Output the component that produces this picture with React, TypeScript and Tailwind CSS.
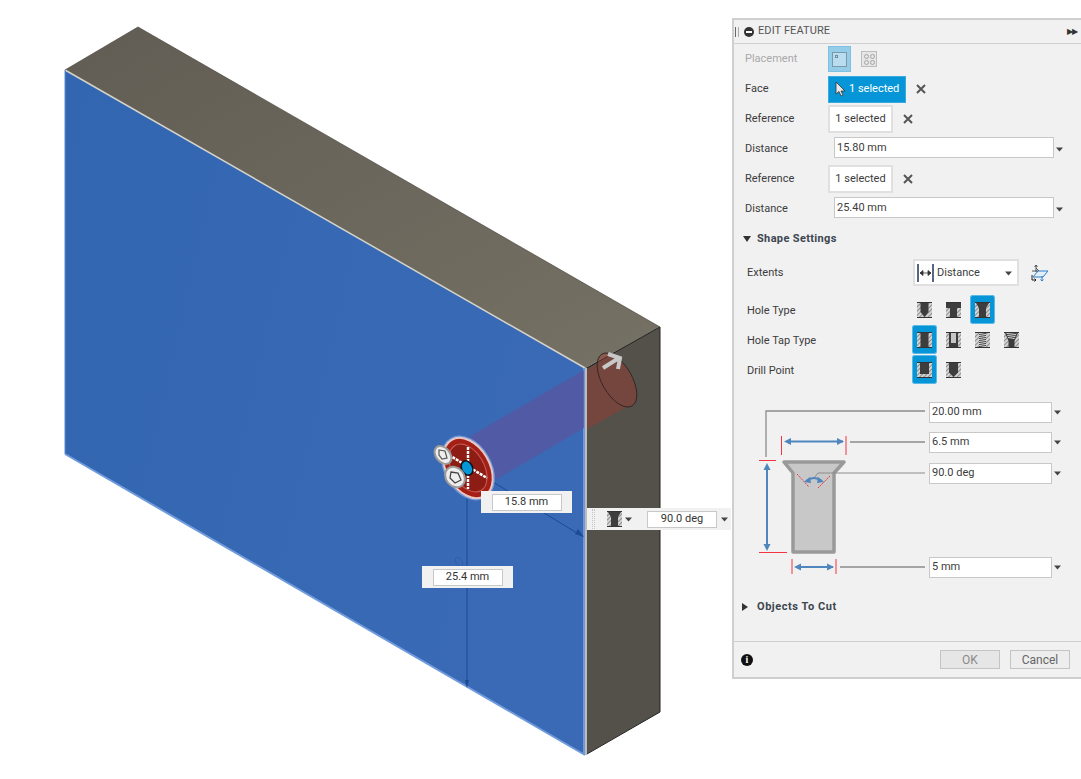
import React from "react";

const font = { fontFamily: "Roboto, 'Liberation Sans', sans-serif" };

function Caret({ className = "" }: { className?: string }) {
  return (
    <svg width="7" height="5" viewBox="0 0 7 5" className={className}>
      <path d="M0 0.5H7L3.5 4.5Z" fill="#444" />
    </svg>
  );
}

function Close({ className = "" }: { className?: string }) {
  return (
    <svg width="10" height="10" viewBox="0 0 10 10" className={className}>
      <path d="M1 1L9 9M9 1L1 9" stroke="#555" strokeWidth="2" />
    </svg>
  );
}

function Hatch({ id }: { id: string }) {
  return (
    <pattern id={id} width="3" height="3" patternUnits="userSpaceOnUse" patternTransform="rotate(-45)">
      <rect width="3" height="3" fill="#d4d4d4" />
      <rect width="3" height="1" fill="#8c8c8c" />
    </pattern>
  );
}

type Kind = "blind" | "counterbore" | "countersink" | "simple" | "clearance" | "tapped" | "taper" | "flat" | "angled";

function HoleIcon({ kind, id }: { kind: Kind; id: string }) {
  const dark = "#3d3d3d";
  const body: Record<Kind, React.ReactNode> = {
    blind: <path d="M3.500 1H11.500V10L7.500 15L3.500 10Z" fill={dark} />,
    counterbore: <path d="M0 1H15V6H11V15H4V6H0Z" fill={dark} />,
    countersink: <path d="M1 1H14L11 6V15H4V6Z" fill={dark} />,
    simple: <rect x="3.500" y="1" width="8" height="14" fill={dark} />,
    clearance: (
      <g>
        <rect x="3" y="1" width="9" height="14" fill={dark} />
        <rect x="5" y="1" width="5" height="10" fill="#c6c6c6" />
      </g>
    ),
    tapped: (
      <g>
        <rect x="4" y="1" width="7" height="14" fill="#e0e0e0" />
        {[2, 4, 6, 8, 10, 12, 14].map((y) => (
          <path key={y} d={`M4 ${y + 0.5}L11 ${y - 0.5}`} stroke={dark} strokeWidth="1" />
        ))}
      </g>
    ),
    taper: (
      <g>
        <path d="M1 1H14L10.500 9V15H4.500V9Z" fill={dark} />
        <path d="M2.500 1H12.500L10.500 7H4.500Z" fill="#dcdcdc" />
        {[2, 4, 6].map((y) => (
          <path key={y} d={`M${2 + y / 3} ${y + 0.5}L${13 - y / 3} ${y - 0.5}`} stroke={dark} strokeWidth="1" />
        ))}
      </g>
    ),
    flat: <rect x="3" y="1" width="9" height="11" fill={dark} />,
    angled: <path d="M3 1H12V10.500L7.500 15L3 10.500Z" fill={dark} />,
  };
  return (
    <svg width="15" height="16" viewBox="0 0 15 16" className="block">
      <defs>
        <Hatch id={id} />
      </defs>
      <rect y="0.500" width="15" height="15" fill={`url(#${id})`} />
      {body[kind]}
      <path d="M0 0.500H15M0 15.500H15" stroke="#333" strokeWidth="1" />
    </svg>
  );
}

function HoleBtn({ kind, id, on }: { kind: Kind; id: string; on?: boolean }) {
  return (
    <div
      className={`flex h-[27px] w-[23px] items-center justify-center rounded-[1px] ${
        on ? "bg-[#0696d7] outline outline-1 outline-[#5cb8e4]" : ""
      }`}
    >
      <HoleIcon kind={kind} id={id} />
    </div>
  );
}

function Label({ children }: { children: React.ReactNode }) {
  return <div className="w-[83px] shrink-0 text-[#3c3c3c]">{children}</div>;
}

function SelectionBtn() {
  return (
    <div className="flex h-[28px] w-[65px] items-center justify-center border-2 border-[#e0e0e0] bg-white text-[#3c3c3c]">
      1 selected
    </div>
  );
}

function ValueInput({ value, className = "" }: { value: string; className?: string }) {
  return (
    <div className={`mb-[3px] flex h-[21px] items-center border border-[#c8c8c8] bg-white px-[2px] pt-[2px] text-[#3c3c3c] ${className}`}>
      {value}
    </div>
  );
}

function Scene() {
  return (
    <svg className="absolute inset-0" width="1081" height="779" viewBox="0 0 1081 779">
      <defs>
        <linearGradient id="topFace" x1="0" y1="0" x2="1" y2="1">
          <stop offset="0" stopColor="#625d54" />
          <stop offset="1" stopColor="#757164" />
        </linearGradient>
        <linearGradient id="blueFace" x1="0" y1="0" x2="1" y2="0.300">
          <stop offset="0" stopColor="#3266b1" />
          <stop offset="1" stopColor="#3a6ab5" />
        </linearGradient>
      </defs>
      <path d="M65 70L138 27L660 327L585 368Z" fill="url(#topFace)" />
      <path d="M585 368L660 327V712L585 755Z" fill="#54514a" />
      <path d="M65 70L585 368V755L65 454Z" fill="url(#blueFace)" />
      <path d="M65 70L585 368" stroke="#d5d2c8" strokeWidth="1.500" />
      <path d="M584 368V755" stroke="#6f97dc" strokeWidth="2" />
      <path d="M586 368V755" stroke="#bdbdb8" strokeWidth="2" />
      <path d="M65 454L585 755" stroke="#6f9bdc" strokeWidth="2" />
      <path d="M65 70V454" stroke="#5b8ad0" strokeWidth="1" />
      <path d="M660 327L587 368" stroke="#222" strokeWidth="1" />
      <path d="M660 327V712L587 754" stroke="#222" strokeWidth="1" fill="none" />
      <path d="M138 27L660 327M138 27L65 70" stroke="#4a463f" strokeWidth="0.700" />

      <path d="M467 438L584 370V428L492 482Z" fill="#5a55a0" fillOpacity="0.75" />
      <g opacity="0.4" fill="#a8372c">
        <path d="M587 370L601 361L628 406L587 429Z" />
        <ellipse cx="617" cy="380" rx="15" ry="30" transform="rotate(-30 617 380)" />
      </g>
      <ellipse cx="617" cy="380" rx="15" ry="30" transform="rotate(-30 617 380)" fill="none" stroke="#2a2220" strokeWidth="0.800" />

      <path d="M603 368L619 358M608 354L620 358L618 369" stroke="#c8c8c8" strokeWidth="4" fill="none" />

      <path d="M493 482L582 536" stroke="#1c4a94" strokeWidth="1" />
      <path d="M584 537L575 534L578 529Z" fill="#1c4a94" />
      <path d="M467 490V686" stroke="#1c4a94" strokeWidth="1" />
      <path d="M467 688L465 680H469Z" fill="#1c4a94" />
      <ellipse cx="459" cy="562" rx="3" ry="5" transform="rotate(-35 459 562)" fill="none" stroke="#2d5ca6" strokeWidth="0.800" />

      <ellipse cx="468" cy="468" rx="23" ry="34" transform="rotate(-30 468 468)" fill="none" stroke="#6f97dc" strokeWidth="1.500" />
      <ellipse cx="468" cy="468" rx="21.500" ry="32.500" transform="rotate(-30 468 468)" fill="#a51f16" stroke="#e8c8c4" strokeWidth="2" />
      <ellipse cx="468" cy="468" rx="16" ry="26" transform="rotate(-30 468 468)" fill="#8d1c14" stroke="#c9605a" strokeWidth="1" />
      <path d="M468 447V489M449 455L487 478" stroke="#fff" strokeWidth="2.500" strokeDasharray="3 1" />
      <ellipse cx="467" cy="468" rx="5.500" ry="7.500" transform="rotate(-25 467 468)" fill="#0696d7" stroke="#111" strokeWidth="1.500" />
      <ellipse cx="443" cy="455" rx="7" ry="10" transform="rotate(-40 443 455)" fill="#eee" stroke="#9c9c9c" strokeWidth="2" />
      <path d="M439 450L445 451L447 458L442 459L439 455Z" fill="none" stroke="#555" strokeWidth="1.200" />
      <ellipse cx="455" cy="477" rx="9" ry="11" transform="rotate(-40 455 477)" fill="#eee" stroke="#9c9c9c" strokeWidth="2" />
      <path d="M451 472L458 473L461 480L455 483L450 478Z" fill="none" stroke="#444" strokeWidth="1.300" />
    </svg>
  );
}

function Diagram() {
  const blue = "#4f86bd";
  const red = "#f0353f";
  const grey = "#8c8c8c";
  return (
    <svg width="195" height="190" viewBox="734 390 195 190" className="block shrink-0">
      <path d="M766 457V411H925M850 442H925M840 567H925" fill="none" stroke={grey} strokeWidth="1.300" />
      <path d="M784 462H844L834 473V552H793V473Z" fill="#c8c8c8" stroke="#999" strokeWidth="3.500" strokeLinejoin="round" />
      <path d="M781.500 436V455M846 436V455M792 559V574M836 559V574M759 460.500H776M759 552.500H787" stroke={red} strokeWidth="1" fill="none" />
      <path d="M797 474L809 487M830 476L818 488" stroke={red} strokeWidth="1" strokeDasharray="2 1" />
      <path d="M814 478L818 473H925" fill="none" stroke={grey} strokeWidth="1" />
      <g stroke={blue} strokeWidth="2" fill="none">
        <path d="M787 441.500H843" />
        <path d="M767 466V548" />
        <path d="M797 567H833" />
        <path d="M806 481Q814 475 822 481" />
      </g>
      <g fill={blue}>
        <path d="M784 441.500L791 438V445Z" />
        <path d="M844 441.500L837 438V445Z" />
        <path d="M767 463L763.500 470H770.500Z" />
        <path d="M767 551L763.500 544H770.500Z" />
        <path d="M794 567L801 563.500V570.500Z" />
        <path d="M834 567L827 563.500V570.500Z" />
        <path d="M804 482L810 477L811 483Z" />
        <path d="M824 482L818 477L817 483Z" />
      </g>
    </svg>
  );
}

function DimRow({ value, className = "" }: { value: string; className?: string }) {
  return (
    <div className={`flex items-center ${className}`}>
      <div className="flex h-[21px] w-[123px] items-center border border-[#c8c8c8] bg-white px-[2px] text-[#3c3c3c]">{value}</div>
      <Caret className="ml-[2px]" />
    </div>
  );
}

function Panel() {
  return (
    <div className="relative mt-[18px] flex h-[661px] w-[349px] flex-col border-y-2 border-l-2 border-[#cfcfcf] bg-[#f1f1f1] text-[11px]" style={font}>
      <div className="flex h-[24px] shrink-0 items-center border-b border-[#d0d0d0] pl-[1px] pr-[4px] text-[#555]">
        <div className="flex h-[10px] w-[4px] justify-between">
          <div className="w-px bg-[#666]" />
          <div className="w-px bg-[#aaa]" />
        </div>
        <div className="ml-[5px] flex h-[10px] w-[10px] items-center justify-center rounded-full bg-[#333]">
          <div className="h-[2px] w-[6px] bg-white" />
        </div>
        <div className="ml-[4px] text-[11px] tracking-[0.1px]">EDIT FEATURE</div>
        <div className="ml-auto text-[8px] leading-none tracking-[-1px] text-[#333]">▶▶</div>
      </div>

      <div className="pl-[11px]">
        <div className="flex h-[30px] items-center">
          <div className="w-[83px] shrink-0 text-[#a9a9a9]">Placement</div>
          <div className="flex h-[26px] w-[23px] items-center justify-center border border-[#7cc0e4] bg-[#95cde8]">
            <div className="relative h-[15px] w-[15px] border border-[#7a9aac] bg-[#b9dcee]">
              <div className="absolute left-[2px] top-[2px] h-[3px] w-[3px] border border-[#6c8ea3]" />
            </div>
          </div>
          <div className="ml-[10px] grid h-[16px] w-[16px] grid-cols-2 place-items-center border border-[#bdbdbd] bg-[#e6e6e6] p-[1px]">
            {[0, 1, 2, 3].map((i) => (
              <div key={i} className="h-[5px] w-[5px] rounded-full border border-[#a5a5a5]" />
            ))}
          </div>
        </div>

        <div className="flex h-[30px] items-center">
          <Label>Face</Label>
          <div className="flex h-[27px] w-[78px] items-center border border-[#3aa9de] bg-[#0696d7] pl-[6px] text-white">
            <svg width="11" height="16" viewBox="0 0 11 16" className="mr-[3px] shrink-0">
              <path d="M1 1V13L4 10.500L6 15L8 14L6 10H10Z" fill="#e8e8e8" stroke="#333" strokeWidth="0.800" />
            </svg>
            1 selected
          </div>
          <Close className="ml-[10px]" />
        </div>

        <div className="flex h-[30px] items-center">
          <Label>Reference</Label>
          <SelectionBtn />
          <Close className="ml-[10px]" />
        </div>
        <div className="flex h-[30px] items-center">
          <Label>Distance</Label>
          <ValueInput value="15.80 mm" className="ml-[6px] w-[220px]" />
          <Caret className="ml-[2px]" />
        </div>
        <div className="flex h-[30px] items-center">
          <Label>Reference</Label>
          <SelectionBtn />
          <Close className="ml-[10px]" />
        </div>
        <div className="flex h-[30px] items-center">
          <Label>Distance</Label>
          <ValueInput value="25.40 mm" className="ml-[6px] w-[220px]" />
          <Caret className="ml-[2px]" />
        </div>

        <div className="-ml-[2px] flex h-[30px] items-center font-bold tracking-[0.35px] text-[#3c4650]">
          <svg width="8" height="6" viewBox="0 0 8 6" className="mr-[6px]">
            <path d="M0 0H8L4 6Z" fill="#333" />
          </svg>
          Shape Settings
        </div>
      </div>

      <div className="pl-[13px]">
        <div className="mt-[5px] flex h-[27px] items-center">
          <div className="w-[166px] shrink-0 pt-[2px] text-[#3c3c3c]">Extents</div>
          <div className="flex h-[27px] w-[106px] items-center border-2 border-[#e0e0e0] bg-white pl-[2px] pr-[5px] pt-[1px] text-[#3c3c3c]">
            <svg width="17" height="18" viewBox="0 0 17 18" className="mr-[3px] shrink-0">
              <path d="M1 0V18M16 0V18" stroke="#1f3560" strokeWidth="1.500" />
              <path d="M3 9H14M3 9L6 6.500V11.500ZM14 9L11 6.500V11.500Z" stroke="#333" strokeWidth="0.800" fill="#333" />
            </svg>
            Distance
            <Caret className="ml-auto" />
          </div>
          <svg width="18" height="18" viewBox="0 0 18 18" className="ml-[12px]">
            <path d="M5 1V8M3.500 3L5 1L6.500 3M1 7H8L5 4" stroke="#333" strokeWidth="0.800" fill="none" />
            <path d="M7 7H17L12 13H2Z" stroke="#2a7fc9" strokeWidth="1" fill="#e3eef8" />
            <path d="M1 11V16H5M3.500 14.500L5 16L3.500 17.500" stroke="#222" strokeWidth="1" fill="none" />
            <path d="M11 12V17M9.500 15.500L11 17L12.500 15.500" stroke="#2a7fc9" strokeWidth="1" fill="none" />
          </svg>
        </div>

        <div className="mt-[10px] flex h-[30px] items-center">
          <div className="w-[166px] shrink-0 text-[#3c3c3c]">Hole Type</div>
          <div className="mb-[3px] flex gap-[6px]">
            <HoleBtn kind="blind" id="h1" />
            <HoleBtn kind="counterbore" id="h2" />
            <HoleBtn kind="countersink" id="h3" on />
          </div>
        </div>
        <div className="flex h-[30px] items-center">
          <div className="w-[166px] shrink-0 text-[#3c3c3c]">Hole Tap Type</div>
          <div className="mb-[3px] flex gap-[6px]">
            <HoleBtn kind="simple" id="h4" on />
            <HoleBtn kind="clearance" id="h5" />
            <HoleBtn kind="tapped" id="h6" />
            <HoleBtn kind="taper" id="h7" />
          </div>
        </div>
        <div className="flex h-[30px] items-center">
          <div className="w-[166px] shrink-0 text-[#3c3c3c]">Drill Point</div>
          <div className="mb-[3px] flex gap-[6px]">
            <HoleBtn kind="flat" id="h8" on />
            <HoleBtn kind="angled" id="h9" />
          </div>
        </div>
      </div>

      <div className="mt-[4px] flex h-[190px] shrink-0">
        <Diagram />
        <div className="flex flex-col pt-[12px]">
          <DimRow value="20.00 mm" />
          <DimRow value="6.5 mm" className="mt-[9px]" />
          <DimRow value="90.0 deg" className="mt-[10px]" />
          <DimRow value="5 mm" className="mt-[73px]" />
        </div>
      </div>

      <div className="mt-[15px] flex h-[24px] shrink-0 items-center pl-[8px] font-bold tracking-[0.55px] text-[#3c4650]">
        <svg width="6" height="8" viewBox="0 0 6 8" className="mr-[9px]">
          <path d="M0 0V8L6 4Z" fill="#333" />
        </svg>
        Objects To Cut
      </div>

      <div className="mt-auto flex h-[36px] shrink-0 items-center border-t border-[#cfcfcf] pl-[7px] pr-[11px]">
        <div className="flex h-[12px] w-[12px] items-center justify-center rounded-full bg-[#111] text-[10px] font-bold leading-none text-white" style={{ fontFamily: "'Liberation Serif', serif" }}>
          i
        </div>
        <div className="ml-auto flex h-[19px] w-[60px] items-center justify-center border border-[#c4c4c4] bg-[#e6e6e6] text-[12px] text-[#8a8a8a]">OK</div>
        <div className="ml-[10px] flex h-[19px] w-[60px] items-center justify-center border border-[#c4c4c4] bg-[#ededed] text-[12px] text-[#666]">Cancel</div>
      </div>
    </div>
  );
}

function Chip({ value, className }: { value: string; className: string }) {
  return (
    <div className={`absolute flex h-[22px] w-[91px] items-center justify-center bg-[#f1f1f1] text-[11px] text-[#333] ${className}`} style={font}>
      <div className="flex h-[17px] w-[70px] items-center justify-center border border-[#c8c8c8] bg-white">{value}</div>
    </div>
  );
}

export default function App() {
  return (
    <div className="relative flex h-[779px] w-[1081px] justify-end overflow-hidden bg-white">
      <Scene />
      <Chip value="15.8 mm" className="left-[481px] top-[491px]" />
      <Chip value="25.4 mm" className="left-[422px] top-[566px]" />
      <div className="absolute left-[587px] top-[508px] flex h-[22px] w-[144px] items-center bg-[#f1f1f1] text-[11px] text-[#333]" style={font}>
        <div className="ml-[5px] h-[20px] w-[3px] border-x border-dotted border-[#c4c4c4]" />
        <div className="ml-[12px]">
          <HoleIcon kind="countersink" id="h0" />
        </div>
        <Caret className="ml-[3px]" />
        <div className="ml-[15px] flex h-[17px] w-[70px] items-center justify-center border border-[#c8c8c8] bg-white">90.0 deg</div>
        <Caret className="ml-[4px]" />
      </div>
      <Panel />
    </div>
  );
}
